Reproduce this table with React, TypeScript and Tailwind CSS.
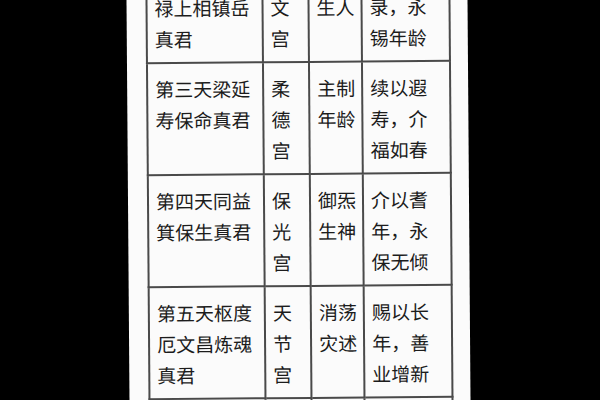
import React from 'react';

type Row = string[][];

// each cell is a list of the lines printed in it
const rows: Row[] = [
  [['禄上相镇岳', '真君'], ['文', '宫'], ['生人'], ['录，永', '锡年龄']],
  [['第三天梁延', '寿保命真君'], ['柔', '德', '宫'], ['主制', '年龄'], ['续以遐', '寿，介', '福如春']],
  [['第四天同益', '箕保生真君'], ['保', '光', '宫'], ['御炁', '生神'], ['介以耆', '年，永', '保无倾']],
  [['第五天枢度', '厄文昌炼魂', '真君'], ['天', '节', '宫'], ['消荡', '灾述'], ['赐以长', '年，善', '业增新']],
];

export default function App() {
  return (
    <div className="w-[600px] h-[400px] bg-black overflow-hidden pl-[128px]">
      <div className="w-[341px] h-[440px] -mt-[20px] bg-[#fbfbfb] pl-[19px] rotate-[-0.43deg]">
        <table
          className="table-fixed border-collapse w-[303px] mt-[-3px] text-[19px] leading-[31px] text-[#1c1c1c]"
          style={{ fontFamily: '"Noto Sans CJK SC", "Noto Sans", sans-serif' }}
        >
          <colgroup>
            <col className="w-[116px]" />
            <col className="w-[46px]" />
            <col className="w-[53px]" />
            <col className="w-[88px]" />
          </colgroup>
          <tbody>
            {rows.map((row, i) => (
              <tr key={i}>
                {row.map((cell, j) => (
                  <td
                    key={j}
                    className="border-2 border-[#4a4a4a] align-top pl-[7px] pr-0 pt-[9px] pb-[8px] whitespace-nowrap"
                  >
                    {cell.map((line, k) => (
                      <div key={k}>{line}</div>
                    ))}
                  </td>
                ))}
              </tr>
            ))}
            <tr>
              <td className="border-2 border-[#4a4a4a] h-[60px]" />
              <td className="border-2 border-[#4a4a4a]" />
              <td className="border-2 border-[#4a4a4a]" />
              <td className="border-2 border-[#4a4a4a]" />
            </tr>
          </tbody>
        </table>
      </div>
    </div>
  );
}
